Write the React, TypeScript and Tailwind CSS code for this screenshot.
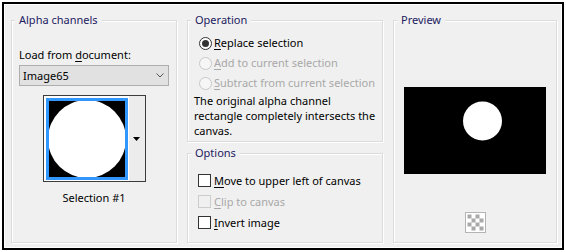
import type { ReactNode } from "react";

const Ul = ({ text, at = 0 }: { text: string; at?: number }) => (
  <>
    {text.slice(0, at)}
    <span className="underline underline-offset-2">{text[at]}</span>
    {text.slice(at + 1)}
  </>
);

const Group = ({ title, className, children }: { title: string; className: string; children?: ReactNode }) => (
  <div className={`relative border border-[#dcdcdc] shadow-[inset_1px_1px_0_#fff,1px_1px_0_#fff] ${className}`}>
    <span className="absolute -top-[9px] left-[3px] h-4 bg-[#f0f0f0] px-[4px] leading-4 text-[#1c2060]">{title}</span>
    {children}
  </div>
);

const Radio = ({ label, checked, disabled }: { label: string; checked?: boolean; disabled?: boolean }) => (
  <div className={`flex h-5 items-center pl-[11px] ${disabled ? "text-[#a8a8a8]" : "text-black"}`}>
    <span
      className={`flex h-[13px] w-[13px] items-center justify-center rounded-full border ${
        disabled ? "border-[#c8c8c8] bg-[#f6f6f6]" : "border-[#333] bg-white"
      }`}
    >
      {checked && <span className="h-[7px] w-[7px] rounded-full bg-[#333]" />}
    </span>
    <span className="ml-[2px] leading-4">
      <Ul text={label} />
    </span>
  </div>
);

const Check = ({ label, disabled }: { label: string; disabled?: boolean }) => (
  <div className={`flex h-[21px] items-center pl-[10px] ${disabled ? "text-[#a8a8a8]" : "text-black"}`}>
    <span className={`h-[13px] w-[13px] border ${disabled ? "border-[#cccccc] bg-[#f0f0f0]" : "border-[#333] bg-white"}`} />
    <span className="ml-[3px] leading-4">
      <Ul text={label} />
    </span>
  </div>
);

export default function App() {
  return (
    <div className="h-[252px] w-[566px] bg-white p-[2px] font-['Noto_Sans',sans-serif] text-[11px] text-black">
      <div className="h-full border-2 border-black">
        <div className="flex h-full gap-[10px] border border-white bg-[#f0f0f0] pl-[6px] pt-[15px]">
          {/* Alpha channels */}
          <Group title="Alpha channels" className="h-[223px] w-[166px]">
            <div className="flex flex-col pl-[7px] pt-[26px]">
              <div className="leading-4">
                Load from <Ul text="document:" />
              </div>
              <div className="mt-[2px] flex h-[21px] w-[150px] items-center justify-between border border-[#adadad] bg-[#e1e1e1] pl-[3px] pr-[4px]">
                <span className="leading-4">Image65</span>
                <svg width="8" height="5" viewBox="0 0 8 5">
                  <path d="M0.5 0.5 L4 4 L7.5 0.5" fill="none" stroke="#555" strokeWidth="1" />
                </svg>
              </div>
            </div>
            <div className="mt-[9px] flex justify-center">
              <div className="flex h-[87px] w-[103px] border border-[#3c3c3c] bg-white pl-[2px] pt-[2px] pb-px">
                <div className="h-[82px] w-[82px] border-[3px] border-[#3297fd] bg-black">
                  <svg width="76" height="76" viewBox="0 0 76 76" className="block">
                    <circle cx="38" cy="38" r="39" fill="#fff" />
                  </svg>
                </div>
                <div className="-mt-[2px] -mb-px flex flex-1 items-center justify-center border-l border-white bg-[#ececec]">
                  <svg width="7" height="4" viewBox="0 0 7 4">
                    <path d="M0 0 H7 L3.5 4 Z" fill="#000" />
                  </svg>
                </div>
              </div>
            </div>
            <div className="mt-[8px] text-center leading-4">Selection #1</div>
          </Group>

          {/* Operation & Options */}
          <div className="flex w-[196px] flex-col gap-[11px]">
            <Group title="Operation" className="h-[122px]">
              <div className="pt-[12px]">
                <Radio label="Replace selection" checked />
                <Radio label="Add to current selection" disabled />
                <Radio label="Subtract from current selection" disabled />
                <p className="pl-[6px] leading-[15px]">
                  The original alpha channel
                  <br />
                  rectangle completely intersects the
                  <br />
                  canvas.
                </p>
              </div>
            </Group>
            <Group title="Options" className="h-[90px]">
              <div className="pt-[16px]">
                <Check label="Move to upper left of canvas" />
                <Check label="Clip to canvas" disabled />
                <Check label="Invert image" />
              </div>
            </Group>
          </div>

          {/* Preview */}
          <Group title="Preview" className="h-[223px] w-[164px]">
            <div className="flex flex-col items-center pt-[66px]">
              <div className="h-[87px] w-[142px] bg-black">
                <svg width="142" height="87" viewBox="0 0 142 87" className="block">
                  <circle cx="78.5" cy="34" r="19.5" fill="#fff" />
                </svg>
              </div>
              <svg width="21" height="21" viewBox="0 0 21 21" className="mt-[38px] block">
                <rect x="0.5" y="0.5" width="20" height="20" fill="#fff" stroke="#b4b4b4" />
                {[0, 1, 2, 3].map((r) =>
                  [0, 1, 2, 3].map((c) =>
                    (r + c) % 2 === 0 ? (
                      <rect key={`${r}-${c}`} x={2.5 + c * 4} y={2.5 + r * 4} width="4" height="4" fill="#a9a9a9" />
                    ) : null
                  )
                )}
              </svg>
            </div>
          </Group>
        </div>
      </div>
    </div>
  );
}
